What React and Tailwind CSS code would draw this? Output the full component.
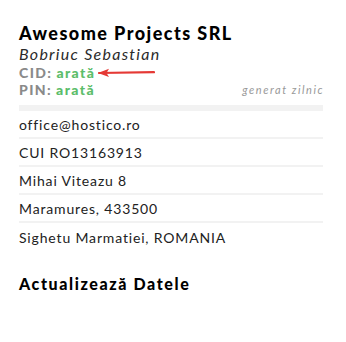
export default function App() {
  const rows = [
    'office@hostico.ro',
    'CUI RO13163913',
    'Mihai Viteazu 8',
    'Maramures, 433500',
    'Sighetu Marmatiei, ROMANIA',
  ];

  return (
    <div className="w-[346px] h-[342px] bg-white font-['Lato',sans-serif] text-[#222]">
      <div className="ml-[19px] w-[304px] pt-[22px]">
        <h1 className="text-[18px] leading-[22px] font-black tracking-[0.08em] text-black">Awesome Projects SRL</h1>
        <p className="text-[16px] leading-[19px] italic tracking-[0.08em] text-[#2a2a2a]">Bobriuc Sebastian</p>

        <div className="mt-[2px] flex items-center text-[14px] leading-[16px] font-black tracking-[0.1em]">
          <span className="text-[#8a8a8a]">CID:</span>
          <span className="ml-[4px] text-[#5cbd6a]">arată</span>
          {/* red arrow pointing at the CID value */}
          <svg className="ml-[2px]" width="58" height="10" viewBox="0 0 58 10">
            <path d="M2 5 L57 4.2" stroke="#e53935" strokeWidth="2.2" strokeLinecap="round" />
            <path d="M1 5 L12 0.8 L9.5 5 L12 9 Z" fill="#e53935" />
          </svg>
        </div>
        <div className="flex items-end justify-between leading-[16px] mt-[1px]">
          <div className="text-[14px] font-black tracking-[0.1em]">
            <span className="text-[#8a8a8a]">PIN:</span>
            <span className="ml-[4px] text-[#5cbd6a]">arată</span>
          </div>
          <span className="text-[11px] italic tracking-[0.14em] mr-[-1px] text-[#999]">generat zilnic</span>
        </div>

        <div className="mt-[7px] h-[6px] bg-[#f2f2f2]"></div>

        <div className="flex flex-col">
          {rows.map((r, i) => (
            <div
              key={r}
              className={`h-[28px] flex items-center text-[14px] tracking-[0.06em] text-[#222] ${i < rows.length - 1 ? 'border-b-2 border-[#f2f2f2]' : ''}`}
            >
              {r}
            </div>
          ))}
        </div>

        <h2 className="mt-[21px] text-[16px] font-black tracking-[0.1em] text-black">Actualizează Datele</h2>
      </div>
    </div>
  );
}
